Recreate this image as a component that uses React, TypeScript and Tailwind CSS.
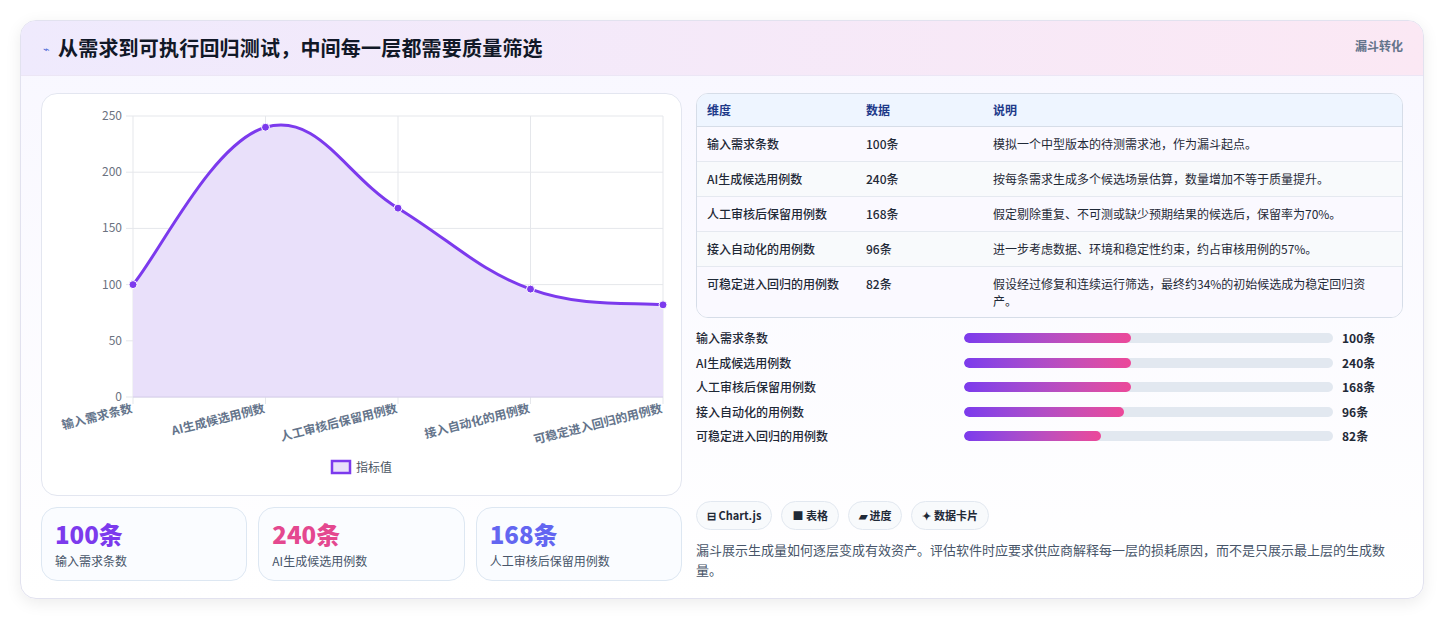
import React from "react";

const pts = [100, 240, 168, 96, 82].map((v, i) => [91 + i * 132.5, 303 - v * 1.124]);
function curve() {
  let d = `M${pts[0][0]},${pts[0][1]}`;
  for (let i = 0; i < pts.length - 1; i++) {
    const p0 = pts[Math.max(0, i - 1)], p1 = pts[i], p2 = pts[i + 1], p3 = pts[Math.min(pts.length - 1, i + 2)];
    const t = 0.4 / 2;
    const c1 = [p1[0] + (p2[0] - p0[0]) * t, p1[1] + (p2[1] - p0[1]) * t];
    const c2 = [p2[0] - (p3[0] - p1[0]) * t, p2[1] - (p3[1] - p1[1]) * t];
    d += ` C${c1[0]},${c1[1]} ${c2[0]},${c2[1]} ${p2[0]},${p2[1]}`;
  }
  return d;
}
const labels = ["输入需求条数", "AI生成候选用例数", "人工审核后保留用例数", "接入自动化的用例数", "可稳定进入回归的用例数"];
const rows = [
  ["输入需求条数", "100条", "模拟一个中型版本的待测需求池，作为漏斗起点。"],
  ["AI生成候选用例数", "240条", "按每条需求生成多个候选场景估算，数量增加不等于质量提升。"],
  ["人工审核后保留用例数", "168条", "假定剔除重复、不可测或缺少预期结果的候选后，保留率为70%。"],
  ["接入自动化的用例数", "96条", "进一步考虑数据、环境和稳定性约束，约占审核用例的57%。"],
  ["可稳定进入回归的用例数", "82条", "假设经过修复和连续运行筛选，最终约34%的初始候选成为稳定回归资产。"],
];
const bars = [45.3, 45.3, 45.3, 43.4, 37.1];

function Chart() {
  const d = curve();
  return (
    <svg width="640" height="402" className="block" style={{ fontFamily: "'Noto Sans CJK SC', sans-serif" }}>
      {[0, 50, 100, 150, 200, 250].map((v) => {
        const y = 303 - v * 1.124;
        return (
          <g key={v}>
            <line x1={84} x2={621} y1={y} y2={y} stroke="#e5e7eb" />
            <text x={80} y={y + 4} textAnchor="end" fontSize="12" fill="#6b7280">{v}</text>
          </g>
        );
      })}
      {pts.map((p, i) => (
        <line key={i} x1={p[0]} x2={p[0]} y1={22} y2={310} stroke="#e5e7eb" />
      ))}
      <path d={`${d} L621,303 L91,303 Z`} fill="#e9e0fa" />
      <line x1={91} x2={621} y1={303} y2={303} stroke="#d4cdea" />
      <path d={d} fill="none" stroke="#7c3aed" strokeWidth="3" />
      {pts.map((p, i) => (
        <circle key={i} cx={p[0]} cy={p[1]} r="4" fill="#7c3aed" stroke="#fff" strokeWidth="1" />
      ))}
      {labels.map((l, i) => (
        <text key={l} x={pts[i][0]} y={318} textAnchor="end" fontSize="12" fontWeight="600" fill="#64748b" transform={`rotate(-14 ${pts[i][0]} 318)`}>{l}</text>
      ))}
      <rect x={290} y={367} width={18} height={12} fill="#e9e0fa" stroke="#7c3aed" strokeWidth="2.5" />
      <text x={314} y={378} fontSize="12" fill="#4b5563">指标值</text>
    </svg>
  );
}

export default function App() {
  return (
    <div className="bg-white min-h-[620px] p-5" style={{ fontFamily: "'Noto Sans CJK SC', 'Noto Sans', sans-serif" }}>
      <div className="rounded-2xl border border-[#e2e2ef] shadow-[0_4px_16px_rgba(0,0,0,0.08)] overflow-hidden bg-gradient-to-b from-[#f8f7ff] to-white h-[579px]">
        <div className="h-[55px] flex items-center justify-between pl-[22px] pr-5 bg-gradient-to-r from-[#efeafd] to-[#fbe8f4] border-b border-[#ece6f5]">
          <div className="flex items-center gap-[8px]">
            <span className="text-[#4f6bd8] text-[11px]">⌁</span>
            <span className="text-[20px] font-bold text-[#111827] tracking-[0.2px]">从需求到可执行回归测试，中间每一层都需要质量筛选</span>
          </div>
          <span className="text-[12px] font-bold text-[#64748b] self-start mt-4">漏斗转化</span>
        </div>
        <div className="flex gap-[14px] px-5 pt-[17px]">
          <div className="w-[641px] flex flex-col gap-[11px]">
            <div className="h-[403px] rounded-2xl border border-[#e3e6f0] bg-white overflow-hidden">
              <Chart />
            </div>
            <div className="grid grid-cols-3 gap-[11px]">
              {[["100条", "输入需求条数", "text-[#7c3aed]"], ["240条", "AI生成候选用例数", "text-[#e4488f]"], ["168条", "人工审核后保留用例数", "text-[#6366f1]"]].map(([n, l, c]) => (
                <div key={l} className="h-[74px] rounded-2xl border border-[#dde7f2] bg-[#fafcff] px-[13px] pt-[10px]">
                  <div className={`text-[24px] font-extrabold leading-[32px] ${c}`}>{n}</div>
                  <div className="text-[12px] text-[#475569] mt-[2px]">{l}</div>
                </div>
              ))}
            </div>
          </div>
          <div className="flex-1 flex flex-col">
            <div className="rounded-xl border border-[#d6dde8] overflow-hidden bg-white text-[12px]">
              <div className="flex h-[33px] items-center bg-[#eef5ff] border-b border-[#d6dde8] font-semibold text-[#1e3a8a]">
                <div className="w-[169px] pl-[10px]">维度</div>
                <div className="w-[127px]">数据</div>
                <div className="flex-1">说明</div>
              </div>
              {rows.map((r, i) => (
                <div key={i} className={`flex py-[8px] leading-[18px] text-[#1f2937] ${i < 4 ? "border-b border-[#e5e9f0]" : ""} ${i % 2 === 0 ? "bg-[#faf9ff]" : "bg-[#f8fafc]"}`}>
                  <div className="w-[169px] pl-[10px] font-medium">{r[0]}</div>
                  <div className="w-[127px] font-medium">{r[1]}</div>
                  <div className="flex-1 pr-4 leading-[17px]">{r[2]}</div>
                </div>
              ))}
            </div>
            <div className="mt-[11px] flex flex-col gap-[6.5px]">
              {rows.map((r, i) => (
                <div key={i} className="flex items-center h-[18px] text-[12px] font-medium text-[#1f2937]">
                  <div className="w-[268px]">{r[0]}</div>
                  <div className="w-[369px] h-[10px] rounded-full bg-[#e2e8f0] overflow-hidden">
                    <div className="h-full rounded-full bg-gradient-to-r from-[#7c3aed] to-[#ec4899]" style={{ width: `${bars[i]}%` }} />
                  </div>
                  <div className="ml-[9px] font-bold">{r[1]}</div>
                </div>
              ))}
            </div>
            <div className="mt-[56px] flex gap-[9px]">
              {["⊟ Chart.js", "■ 表格", "▰ 进度", "✦ 数据卡片"].map((c) => (
                <span key={c} className="h-[29px] px-[10px] flex items-center rounded-full border border-[#e2e8f0] bg-[#f8fafc] text-[11px] font-semibold text-[#1f2937]">{c}</span>
              ))}
            </div>
            <p className="mt-[10px] text-[13px] leading-[20px] text-[#475569] pr-4">漏斗展示生成量如何逐层变成有效资产。评估软件时应要求供应商解释每一层的损耗原因，而不是只展示最上层的生成数量。</p>
          </div>
        </div>
      </div>
    </div>
  );
}
